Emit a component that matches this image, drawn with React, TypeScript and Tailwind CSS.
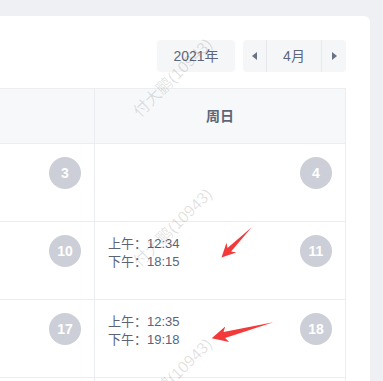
import React from "react";

const font = { fontFamily: '"Liberation Sans", "Noto Sans CJK SC", sans-serif' };

function Circle({ n }: { n: number }) {
  return (
    <div className="flex h-8 w-8 items-center justify-center rounded-full bg-[#cdcfd8] text-[14px] font-bold text-white">
      {n}
    </div>
  );
}

function Times({ am, pm }: { am: string; pm: string }) {
  return (
    <div className="text-[13px] leading-[18px] text-[#5b6477]">
      <div>上午：{am}</div>
      <div>下午：{pm}</div>
    </div>
  );
}

function Row({ left, right, times }: { left: number; right: number; times?: [string, string] }) {
  return (
    <div className="flex h-[78px] border-b border-[#ebedf1]">
      <div className="flex flex-1 justify-end border-r border-[#ebedf1] p-[13px]">
        <Circle n={left} />
      </div>
      <div className="flex w-[250px] justify-between p-[13px]">
        <div>{times ? <Times am={times[0]} pm={times[1]} /> : null}</div>
        <Circle n={right} />
      </div>
    </div>
  );
}

function Watermark({ top }: { top: string }) {
  return null;
}

export default function App() {
  const marks = ["top-[78px]", "top-[228px]", "top-[378px]"];
  return (
    <div className="relative h-[381px] w-[383px] overflow-hidden bg-[#eff0f4]" style={font}>
      <div className="flex justify-end pr-[13px] pt-4">
        <div className="w-[560px] shrink-0 rounded-md bg-white px-6 pt-6">
          <div className="flex h-8 justify-end gap-2">
            <div className="flex w-[78px] items-center justify-center rounded bg-[#f5f6f8] text-[14px] text-[#5d667a]">
              2021年
            </div>
            <div className="flex w-[103px] rounded bg-[#f5f6f8] text-[14px] text-[#5d667a]">
              <div className="flex w-6 items-center justify-center border-r border-[#e6e8ec]">
                <svg width="5" height="8" viewBox="0 0 5 8">
                  <path d="M5 0 L0 4 L5 8 Z" fill="#6a7286" />
                </svg>
              </div>
              <div className="flex flex-1 items-center justify-center border-r border-[#e6e8ec]">4月</div>
              <div className="flex w-6 items-center justify-center">
                <svg width="5" height="8" viewBox="0 0 5 8">
                  <path d="M0 0 L5 4 L0 8 Z" fill="#6a7286" />
                </svg>
              </div>
            </div>
          </div>
          <div className="mt-4 border-r border-t border-[#ebedf1]">
            <div className="flex h-[55px] border-b border-[#ebedf1] bg-[#f7f8fa]">
              <div className="flex flex-1 items-center justify-center border-r border-[#ebedf1] text-[14px] font-bold text-[#5d6677]">
                周六
              </div>
              <div className="flex w-[250px] items-center justify-center text-[14px] font-bold text-[#5d6677]">
                周日
              </div>
            </div>
            <Row left={3} right={4} />
            <Row left={10} right={11} times={["12:34", "18:15"]} />
            <Row left={17} right={18} times={["12:35", "19:18"]} />
            <Row left={24} right={25} />
          </div>
        </div>
      </div>

      {marks.map((t) => (
        <div
          key={t}
          className={`pointer-events-none absolute left-[173px] ${t} -translate-x-1/2 -translate-y-1/2 -rotate-45 whitespace-nowrap text-[16px] text-[#000000]/[0.13]`}
        >
          付大鹏(10943)
        </div>
      ))}

      <svg className="pointer-events-none absolute left-0 top-0" width="383" height="381" viewBox="0 0 383 381">
        <polygon
          points="221.5,257.5 226.5,242.7 227.5,247.9 251.7,227.3 231.1,251.5 236.3,252.5"
          fill="#f23a3a"
        />
        <polygon
          points="211.7,338.3 225.2,326.6 223.5,332.1 273.3,322.3 225.1,337.9 229.2,342"
          fill="#f23a3a"
        />
      </svg>
    </div>
  );
}
